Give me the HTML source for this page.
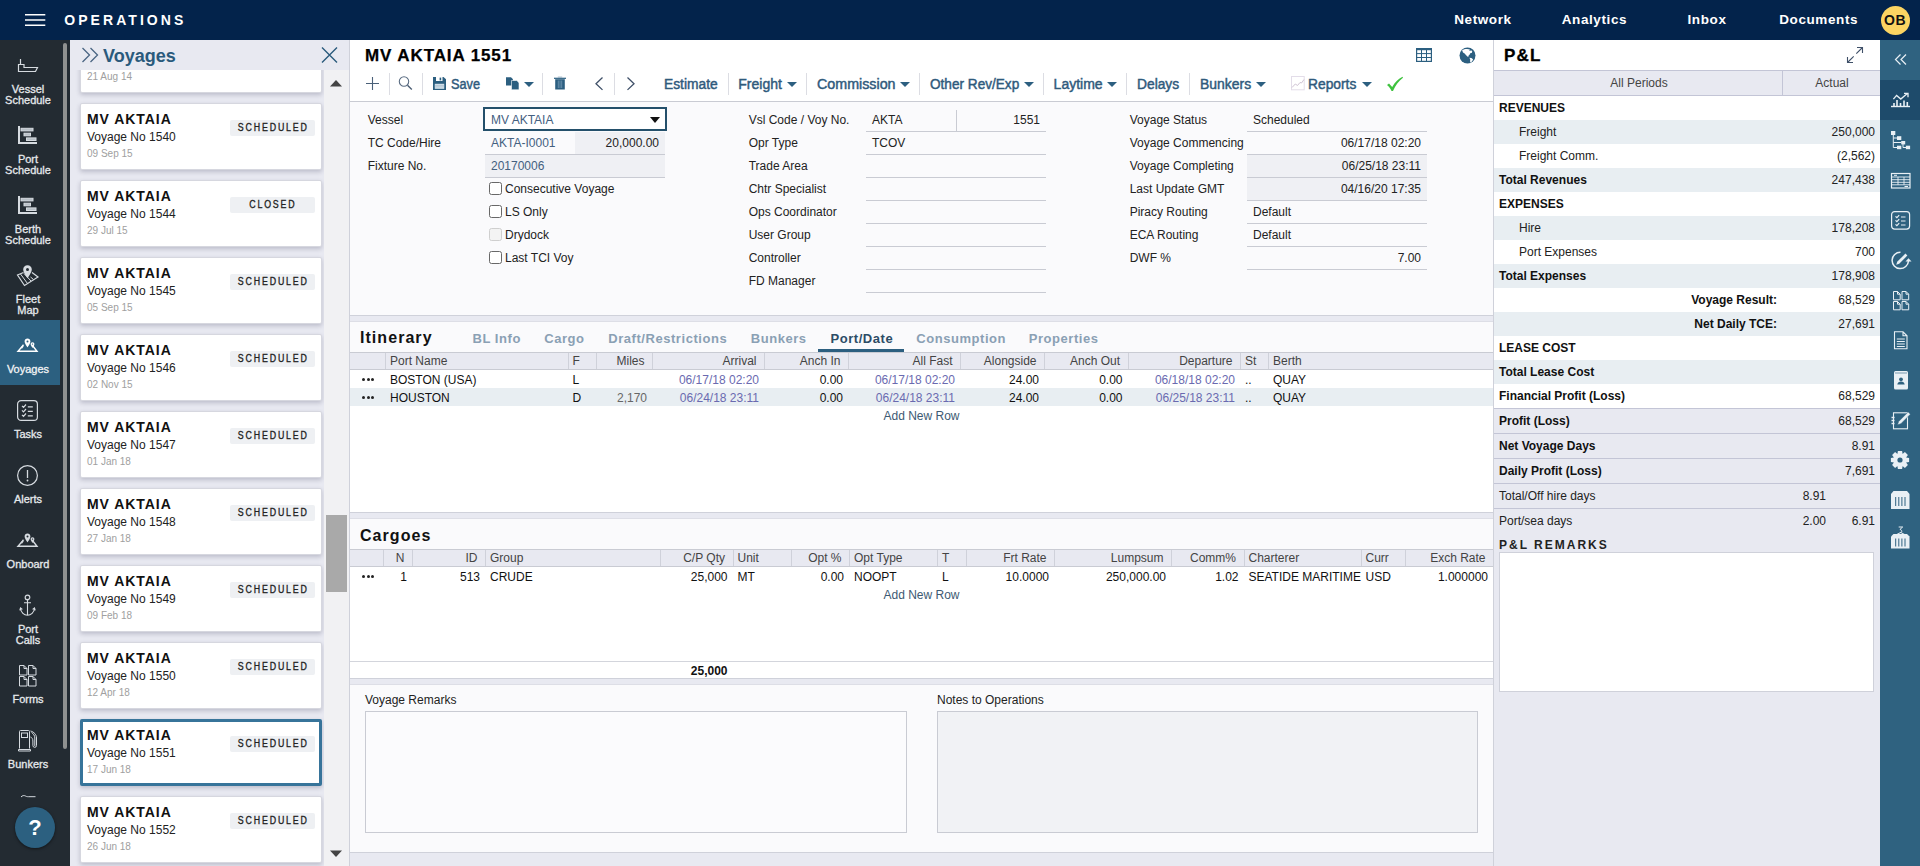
<!DOCTYPE html>
<html lang="en">
<head>
<meta charset="utf-8">
<title>Operations - MV AKTAIA 1551</title>
<style>
*{box-sizing:border-box;margin:0;padding:0}
html,body{width:1920px;height:866px;overflow:hidden;background:#fafafc;font-family:"Liberation Sans",Arial,sans-serif;font-size:12px;color:#222}
.abs{position:absolute}
#top{position:absolute;left:0;top:0;width:1920px;height:40px;background:#03234b;color:#fff}
#top .brand{position:absolute;left:64.300px;top:12px;font-size:14px;font-weight:bold;letter-spacing:3.05px;line-height:16px}
#top .lnk{position:absolute;top:12px;font-size:13.5px;font-weight:bold;letter-spacing:.6px;line-height:16px}
#top .av{position:absolute;left:1880.500px;top:5.500px;width:29px;height:29px;border-radius:50%;background:#fbd462;color:#111;font-weight:bold;font-size:14px;line-height:29px;text-align:center;letter-spacing:.5px}
#nav{position:absolute;left:0;top:40px;width:70px;height:826px;background:#232b32}
#nav .thumb{position:absolute;left:63px;top:3px;width:4px;height:706px;background:#8f9190;border-radius:2px}
#nav .it{position:absolute;left:0;width:56px;text-align:center;color:#e6e9ec;font-size:11px;line-height:11px;-webkit-text-stroke:.3px #e6e9ec}
#nav .act{position:absolute;left:0;top:280px;width:60px;height:65px;background:#2c6080}
#nav svg{position:absolute}
#help{position:absolute;left:15px;top:807px;width:40px;height:41px;border-radius:50%;background:#2c6080;color:#fff;font-weight:bold;font-size:22px;line-height:41px;text-align:center;box-shadow:0 1px 3px rgba(0,0,0,.5)}
#list{position:absolute;left:70px;top:40px;width:279px;height:826px;background:#e8e9f1;overflow:hidden}
#list .hd{position:absolute;left:0;top:0;width:279px;height:30px;background:#e8e9f1}
#list .ttl{position:absolute;left:33px;top:5px;font-size:18px;font-weight:bold;color:#2a5a7c;line-height:22px}
#list .sb{position:absolute;left:254px;top:30px;width:25px;height:796px;background:#f1f1f3}
#list .sbthumb{position:absolute;left:256px;top:475px;width:21px;height:77px;background:#a9a9a9}
.card{position:absolute;left:10px;width:242px;height:67px;background:#fff;border:1px solid #d6d7df;border-radius:2px;box-shadow:0 2px 4px rgba(60,60,90,.25)}
.card .b span{display:inline-block;transform:scaleX(.88);margin:0 -8px}
.card.sel::after{content:"";position:absolute;left:-1px;top:-1px;right:-1px;bottom:-1px;border:3px solid #37749a;border-radius:2px}
.card .n{position:absolute;left:6px;top:7px;font-size:14px;font-weight:bold;letter-spacing:.95px;line-height:16px;color:#111}
.card .v{position:absolute;left:6px;top:25px;font-size:12px;line-height:16px;color:#222}
.card .d{position:absolute;left:6px;top:44px;font-size:10px;line-height:12px;color:#a0a0a0;}
.card .b{position:absolute;left:149px;top:16px;width:85px;height:16px;background:#eef0f3;border-radius:2px;font-size:10px;font-weight:normal;-webkit-text-stroke:.32px #222;letter-spacing:2.1px;line-height:16px;white-space:nowrap;text-align:center;color:#222;padding-left:1px}

#main{position:absolute;left:349px;top:40px;width:1144px;height:826px;background:#fafafc;border-left:1px solid #cfd1da}
#main .wh{position:absolute;left:0;top:0;width:1143px;height:62px;background:#fff;border-bottom:1px solid #c9cbd3}
#main .title{position:absolute;left:15px;top:6px;font-size:17px;font-weight:bold;color:#000;line-height:20px;letter-spacing:.9px;-webkit-text-stroke:.25px #000}
.tb{position:absolute;top:36px;font-size:14px;font-weight:normal;color:#2f5a7c;-webkit-text-stroke:.45px #2f5a7c;line-height:16px;white-space:nowrap;transform:scaleX(.985);transform-origin:0 0}
.tsep{position:absolute;top:33px;width:1px;height:22px;background:#dcdde3}
.car{position:absolute;top:41.700px;width:0;height:0;border-left:5.200px solid transparent;border-right:5.200px solid transparent;border-top:5.800px solid #2c5f80;margin-left:-.2px}
.m svg{position:absolute}
.lb{position:absolute;font-size:12px;line-height:14px;color:#222;white-space:nowrap}
.in{position:absolute;height:23px;border-bottom:1px solid #c9cbd3;font-size:12px;line-height:22px;color:#222;padding:0 6px;white-space:nowrap}
.in.g{background:#eff0f4}
.in.r{text-align:right}
.in.bl{color:#44607f}
.cb{position:absolute;width:13px;height:13px;border:1px solid #686868;border-radius:2.500px;background:#fff}
.cb.dis{border-color:#cfcfcf;background:#f3f3f3}
.band{position:absolute;left:0;width:1143px;height:7px;background:#e8e9f1;border-top:1px solid #cfd1da;border-bottom:1px solid #dddee6}
.sec{position:absolute;left:10px;font-size:16px;font-weight:bold;color:#111;letter-spacing:1.05px;line-height:18px;margin-top:1px}
.tab{position:absolute;top:291px;font-size:13px;font-weight:bold;color:#8aa0b4;letter-spacing:.55px;line-height:16px;white-space:nowrap}
.th{position:absolute;left:0;width:1143px;height:18px;background:#e8e9f1;border-top:1px solid #c9cbd3;border-bottom:1px solid #c9cbd3}
.th div{position:absolute;top:0;height:16px;border-left:1px solid #cfd1da;font-size:12px;line-height:16px;color:#444;padding:0 5px;white-space:nowrap}
.th div.r,.tr div.r{text-align:right}
.th div.c,.tr div.c{text-align:center}
.th div{padding:0 7.500px 0 4px}
.tr div{padding:0 8px 0 3px}
.tr{position:absolute;left:0;width:1143px;height:18px;background:#fff}
.tr.alt{background:#e8eef2}
.tr div{position:absolute;top:1px;height:17px;font-size:12px;line-height:18px;color:#111;padding:0 5px;white-space:nowrap}
.tr div.bl{color:#6a6ab0}
.tr div.gy{color:#666}
.dots{position:absolute;left:12px;top:8px;width:13px;height:3px}
.dots i{position:absolute;top:0;width:3px;height:3px;border-radius:50%;background:#222}
.addrow{position:absolute;left:0;width:1143px;text-align:center;font-size:12px;line-height:14px;color:#3d5a73}
.ta{position:absolute;border:1px solid #c9cbd3;background:#fbfbfd}

#pnl{position:absolute;left:1493px;top:40px;width:387px;height:826px;background:#e8e9f1;border-left:1px solid #cfd1da}
#pnl .hd{position:absolute;left:0;top:0;width:386px;height:31px;background:#fff}
#pnl .ttl{position:absolute;left:10px;top:6px;font-size:17px;font-weight:bold;letter-spacing:1.250px;-webkit-text-stroke:.3px #000;line-height:20px;color:#000}
#pnl .tabs{position:absolute;left:0;top:30px;width:386px;height:26px;background:#e8e9f1;border-top:1px solid #c3c5d6;border-bottom:1px solid #c3c5d6}
#pnl .tabs div{position:absolute;top:0;height:24px;line-height:24px;font-size:12px;color:#444;text-align:center}
.pr{position:absolute;left:0;width:386px;height:24px;background:#fff;font-size:12px;line-height:24px;color:#222}
.pr.a{background:#e8eef2}
.pr.p{background:#e8e9f1;border-top:1px solid #c3c5d6;height:25px}
.pr b{position:absolute;left:5px;top:0;color:#111;white-space:nowrap}
.pr.p b,.pr.p span,.pr.p em,.pr.p u{top:-.5px}
.pr span{position:absolute;left:25px;top:0;white-space:nowrap}
.pr u{position:absolute;left:5px;top:0;text-decoration:none;white-space:nowrap}
.pr i{position:absolute;right:5px;top:0;font-style:normal}
.pr em{position:absolute;right:54px;top:0;font-style:normal}
.pr strong{position:absolute;right:103px;top:0;color:#111}
#right{position:absolute;left:1880px;top:40px;width:40px;height:826px;background:#2f6280}
#right .act{position:absolute;left:0;top:40px;width:40px;height:40px;background:#1e4b6b}
#right svg{position:absolute}
</style>
</head>
<body>
<div id="top">
  <svg class="abs" style="left:25px;top:13px" width="21" height="14" viewBox="0 0 21 14"><path d="M0 1.800h20.300M0 7h20.300M0 12.300h20.300" stroke="#fff" stroke-width="1.400" fill="none"/></svg>
  <div class="brand">OPERATIONS</div>
  <div class="lnk" style="left:1454.200px">Network</div>
  <div class="lnk" style="left:1561.700px">Analytics</div>
  <div class="lnk" style="left:1687.500px">Inbox</div>
  <div class="lnk" style="left:1779.200px">Documents</div>
  <div class="av">OB</div>
</div>

<div id="nav">
  <div class="act"></div>
  <div class="thumb"></div>
  <div class="it" style="top:44px">Vessel<br>Schedule</div>
  <div class="it" style="top:114px">Port<br>Schedule</div>
  <div class="it" style="top:184px">Berth<br>Schedule</div>
  <div class="it" style="top:254px">Fleet<br>Map</div>
  <div class="it" style="top:324px;color:#fff">Voyages</div>
  <div class="it" style="top:389px">Tasks</div>
  <div class="it" style="top:454px">Alerts</div>
  <div class="it" style="top:519px">Onboard</div>
  <div class="it" style="top:584px">Port<br>Calls</div>
  <div class="it" style="top:654px">Forms</div>
  <div class="it" style="top:719px">Bunkers</div>
  <svg style="left:17px;top:18px" width="22" height="15" viewBox="0 0 22 15" fill="none" stroke="#d6dbe0" stroke-width="1.2"><path d="M3.500 1v5.500M1.500 6.500h5.500v3h13.500l-2 4H1.500z"/></svg>
  <svg style="left:17px;top:85px" width="22" height="20" viewBox="0 0 22 20" fill="none" stroke="#d6dbe0" stroke-width="1.2"><path d="M2 1v17h18" stroke-width="2"/><rect x="4" y="3.300" width="12" height="2.600" fill="#b8c0c7" stroke-width="1"/><rect x="7" y="8.200" width="6.500" height="2.600" fill="#b8c0c7" stroke-width="1"/><rect x="9.500" y="12.900" width="9.500" height="2.600" fill="#b8c0c7" stroke-width="1"/></svg>
  <svg style="left:17px;top:155px" width="22" height="20" viewBox="0 0 22 20" fill="none" stroke="#d6dbe0" stroke-width="1.2"><path d="M2 1v17h18" stroke-width="2"/><rect x="4" y="3.300" width="12" height="2.600" fill="#b8c0c7" stroke-width="1"/><rect x="7" y="8.200" width="6.500" height="2.600" fill="#b8c0c7" stroke-width="1"/><rect x="9.500" y="12.900" width="9.500" height="2.600" fill="#b8c0c7" stroke-width="1"/></svg>
  <svg style="left:16px;top:224px" width="24" height="23" viewBox="0 0 24 23" fill="none" stroke="#d6dbe0" stroke-width="1.2"><path d="M7.500 8.500L1.500 11l7 10.500 13.500-8.500-6-4.500" /><path d="M4.500 10l7 9.500M8 9.500l7 7.500M14.500 13l3 2.500" stroke-width="1"/><path d="M11.500 1.200c-2.500 0-4.300 1.900-4.300 4.200 0 3 4.300 8.800 4.300 8.800s4.300-5.800 4.300-8.800c0-2.300-1.800-4.200-4.300-4.200z" fill="#d6dbe0" stroke="none"/><circle cx="11.500" cy="5.400" r="1.500" fill="#232b32" stroke="none"/></svg>
  <svg style="left:16px;top:297px" width="24" height="16" viewBox="0 0 24 16" fill="none" stroke="#ffffff" stroke-width="1.2"><path d="M7 8.500L2 14.200h19L16.500 8.500" stroke-width="1.400"/><path d="M11.500 1.500c-1.700 0-2.900 1.300-2.900 2.900 0 2 2.900 5.800 2.900 5.800s2.900-3.800 2.900-5.800c0-1.600-1.200-2.900-2.900-2.900z" fill="#ffffff" stroke="none"/><circle cx="11.500" cy="4.400" r="1" fill="#2c6080" stroke="none"/><path d="M16.500 5.200c-1.100 0-1.900.9-1.900 1.900 0 1.300 1.900 3.900 1.900 3.900s1.900-2.600 1.900-3.900c0-1-.8-1.900-1.900-1.900z" fill="#ffffff" stroke="none"/><circle cx="16.500" cy="7.100" r=".7" fill="#2c6080" stroke="none"/><path d="M6.800 7.200l-2.300 4.300 2.200-.2 1.500-3.300z" fill="#ffffff" stroke="none" opacity=".8"/></svg>
  <svg style="left:16px;top:359px" width="23" height="23" viewBox="0 0 23 23" fill="none" stroke="#d6dbe0" stroke-width="1.2"><rect x="1.600" y="1.600" width="19.800" height="19.800" rx="3.500"/><path d="M6 6.800l1.500 1.500 2.500-2.800M6 11.300l1.500 1.500 2.500-2.800M6 15.800l1.500 1.500 2.500-2.800M11.800 7.800h5M11.800 12.300h5M11.800 16.800h5"/></svg>
  <svg style="left:16px;top:423.5px" width="23" height="23" viewBox="0 0 23 23" fill="none" stroke="#d6dbe0" stroke-width="1.2"><circle cx="11.500" cy="11.500" r="9.900"/><path d="M11.500 6v8" stroke-width="1.300"/><circle cx="11.500" cy="16.500" r=".9" fill="#d6dbe0" stroke="none"/></svg>
  <svg style="left:16px;top:492px" width="24" height="16" viewBox="0 0 24 16" fill="none" stroke="#d6dbe0" stroke-width="1.2"><path d="M7 8.500L2 14.200h19L16.500 8.500" stroke-width="1.400"/><path d="M11.500 1.500c-1.700 0-2.900 1.300-2.900 2.900 0 2 2.900 5.800 2.900 5.800s2.900-3.800 2.900-5.800c0-1.600-1.200-2.900-2.900-2.900z" fill="#d6dbe0" stroke="none"/><circle cx="11.500" cy="4.400" r="1" fill="#232b32" stroke="none"/><path d="M16.500 5.200c-1.100 0-1.900.9-1.900 1.900 0 1.300 1.900 3.900 1.900 3.900s1.900-2.600 1.900-3.900c0-1-.8-1.900-1.900-1.900z" fill="#d6dbe0" stroke="none"/><circle cx="16.500" cy="7.100" r=".7" fill="#232b32" stroke="none"/><path d="M6.800 7.200l-2.300 4.300 2.200-.2 1.500-3.300z" fill="#d6dbe0" stroke="none" opacity=".8"/></svg>
  <svg style="left:18px;top:553px" width="19" height="24" viewBox="0 0 19 24" fill="none" stroke="#d6dbe0" stroke-width="1.2"><circle cx="9.500" cy="4.400" r="2.300"/><path d="M9.500 6.800V22.500M6 9.700h7M2.500 15.500c.5 4 3.500 6.800 7 6.800s6.500-2.800 7-6.800M1.800 17.300l.7-2.300 1.900 1.400M17.200 17.300l-.7-2.300-1.900 1.400" stroke-width="1.100"/></svg>
  <svg style="left:18px;top:624px" width="20" height="24" viewBox="0 0 20 24" fill="none" stroke="#d6dbe0" stroke-width="1.2"><path d="M1.5 1.5h4.500l3 3v6.500h-7.500zM6.0 1.5v3h3" stroke-width="1"/><path d="M10.5 1.5h4.500l3 3v6.500h-7.500zM15.0 1.5v3h3" stroke-width="1"/><path d="M1.5 12.5h4.500l3 3v6.500h-7.500zM6.0 12.5v3h3" stroke-width="1"/><path d="M10.5 12.5h4.500l3 3v6.500h-7.500zM15.0 12.5v3h3" stroke-width="1"/></svg>
  <svg style="left:17px;top:689px" width="22" height="24" viewBox="0 0 22 24" fill="none" stroke="#d6dbe0" stroke-width="1.2"><path d="M2.500 19.500V2.500a1 1 0 0 1 1-1h8a1 1 0 0 1 1 1v17M1.500 20.500h12v1.500h-12z" stroke-width="1"/><rect x="4.500" y="4" width="6" height="4.500" stroke-width="1"/><path d="M13.500 2c3.500 1 6 3.500 6 7v7.500a1.800 1.800 0 0 1-3.600 0V12c0-2-1-3.500-2.400-4M14.500 3.500c2 1.200 3.300 3.200 3.300 5.500v8" stroke-width="1"/></svg>
  <svg style="left:20px;top:753px" width="18" height="6" viewBox="0 0 18 6" fill="none" stroke="#d6dbe0" stroke-width="1.2"><path d="M1 4c1.500-1.600 3-1.800 4.500-1 1 .5 1.500.7 3 .7h7" stroke-width="1"/></svg>
</div>
<div id="help">?</div>

<div id="list">
  <div class="card" style="top:-14px"><div class="n">MV AKTAIA</div><div class="v">Voyage No 1539</div><div class="d">21 Aug 14</div><div class="b"><span>CLOSED</span></div></div>
  <div class="card" style="top:63px"><div class="n">MV AKTAIA</div><div class="v">Voyage No 1540</div><div class="d">09 Sep 15</div><div class="b"><span>SCHEDULED</span></div></div>
  <div class="card" style="top:140px"><div class="n">MV AKTAIA</div><div class="v">Voyage No 1544</div><div class="d">29 Jul 15</div><div class="b"><span>CLOSED</span></div></div>
  <div class="card" style="top:217px"><div class="n">MV AKTAIA</div><div class="v">Voyage No 1545</div><div class="d">05 Sep 15</div><div class="b"><span>SCHEDULED</span></div></div>
  <div class="card" style="top:294px"><div class="n">MV AKTAIA</div><div class="v">Voyage No 1546</div><div class="d">02 Nov 15</div><div class="b"><span>SCHEDULED</span></div></div>
  <div class="card" style="top:371px"><div class="n">MV AKTAIA</div><div class="v">Voyage No 1547</div><div class="d">01 Jan 18</div><div class="b"><span>SCHEDULED</span></div></div>
  <div class="card" style="top:448px"><div class="n">MV AKTAIA</div><div class="v">Voyage No 1548</div><div class="d">27 Jan 18</div><div class="b"><span>SCHEDULED</span></div></div>
  <div class="card" style="top:525px"><div class="n">MV AKTAIA</div><div class="v">Voyage No 1549</div><div class="d">09 Feb 18</div><div class="b"><span>SCHEDULED</span></div></div>
  <div class="card" style="top:602px"><div class="n">MV AKTAIA</div><div class="v">Voyage No 1550</div><div class="d">12 Apr 18</div><div class="b"><span>SCHEDULED</span></div></div>
  <div class="card sel" style="top:679px"><div class="n">MV AKTAIA</div><div class="v">Voyage No 1551</div><div class="d">17 Jun 18</div><div class="b"><span>SCHEDULED</span></div></div>
  <div class="card" style="top:756px"><div class="n">MV AKTAIA</div><div class="v">Voyage No 1552</div><div class="d">26 Jun 18</div><div class="b"><span>SCHEDULED</span></div></div>
  <div class="sb"></div>
  <div class="sbthumb"></div>
  <svg class="abs" style="left:259px;top:39px" width="14" height="8" viewBox="0 0 14 8"><path d="M1 7.5L7 1l6 6.5z" fill="#444"/></svg>
  <svg class="abs" style="left:259px;top:810px" width="14" height="8" viewBox="0 0 14 8"><path d="M1 .5L7 7l6-6.5z" fill="#444"/></svg>
  <div class="hd">
    <svg class="abs" style="left:11px;top:7px" width="18" height="16" viewBox="0 0 18 16"><path d="M1.500 1l7 7-7 7M9.500 1l7 7-7 7" stroke="#4a6583" stroke-width="1.300" fill="none"/></svg>
    <div class="ttl">Voyages</div>
    <svg class="abs" style="left:250.500px;top:7px" width="17" height="16" viewBox="0 0 17 16"><path d="M1 .5l15 15M16 .5l-15 15" stroke="#2a5a7c" stroke-width="1.4" fill="none"/></svg>
  </div>
</div>
<div id="main" class="m">
  <div class="wh"></div>
  <div class="title">MV AKTAIA 1551</div>
  <svg style="left:16px;top:36px" width="14" height="15" viewBox="0 0 14 15"><path d="M6.500 1v13M0 7.500h13" stroke="#4a6078" stroke-width="1.100" fill="none"/></svg>
  <svg style="left:48px;top:35px" width="16" height="16" viewBox="0 0 16 16"><circle cx="6" cy="6.500" r="4.700" stroke="#5a6c82" stroke-width="1.100" fill="none"/><path d="M9.500 10.200l4.300 4.200" stroke="#4a5c72" stroke-width="1.400" fill="none"/></svg>
  <svg style="left:83px;top:37px" width="13" height="13" viewBox="0 0 13 13"><path d="M0 0h10.500L13 2.300V13H0z" fill="#2c5f80"/><rect x="3" y="0" width="6.500" height="4" fill="#fff"/><rect x="6.600" y=".6" width="1.600" height="2.800" fill="#2c5f80"/><rect x="1.800" y="6.800" width="9.400" height="5" fill="#d9e6ef"/><path d="M1.800 8.300h9.400M1.800 9.900h9.400" stroke="#9fb6c6" stroke-width=".7"/></svg>
  <svg style="left:156px;top:37px" width="14" height="13" viewBox="0 0 14 13"><path d="M0 .2h5l2 2v6.300H0z" fill="#2c5f80"/><path d="M5.500 3.500h5.300l2.200 2.200V12.800H5.500z" fill="#2c5f80" stroke="#fff" stroke-width=".6"/></svg>
  <svg style="left:204px;top:36px" width="12" height="14" viewBox="0 0 12 14"><path d="M0 2.300h12" stroke="#2c5f80" stroke-width="1.200"/><path d="M3.800 1.200h4.400" stroke="#9fb6c6" stroke-width="1.200"/><path d="M1.200 3.200h9.600v10.300H1.200z" fill="#2c5f80"/><path d="M4.300 4.500v7.500M6 4.500v7.500M7.700 4.500v7.500" stroke="#7fa3bd" stroke-width=".7"/></svg>
  <svg style="left:244px;top:36px" width="10" height="15" viewBox="0 0 10 15"><path d="M8.500 1.500L2 7.700l6.500 6.200" stroke="#3f5068" stroke-width="1.300" fill="none"/></svg>
  <svg style="left:276px;top:36px" width="10" height="15" viewBox="0 0 10 15"><path d="M1.500 1.500L8 7.700l-6.500 6.200" stroke="#3f5068" stroke-width="1.300" fill="none"/></svg>
  <div class="tsep" style="left:39px"></div>
  <div class="tsep" style="left:72px"></div>
  <div class="tsep" style="left:192px"></div>
  <div class="tsep" style="left:264px"></div>
  <div class="tsep" style="left:378px"></div>
  <div class="tsep" style="left:456px"></div>
  <div class="tsep" style="left:569px"></div>
  <div class="tsep" style="left:693px"></div>
  <div class="tsep" style="left:776px"></div>
  <div class="tsep" style="left:839px"></div>
  <div class="tb" style="left:101px;transform:scaleX(.91)">Save</div>
  <div class="tb" style="left:313.75px">Estimate</div>
  <div class="tb" style="left:388.300px;transform:scaleX(1)">Freight</div>
  <div class="tb" style="left:466.800px;transform:scaleX(1.02)">Commission</div>
  <div class="tb" style="left:579.500px;transform:scaleX(.972)">Other Rev/Exp</div>
  <div class="tb" style="left:703.600px;transform:scaleX(1)">Laytime</div>
  <div class="tb" style="left:787px">Delays</div>
  <div class="tb" style="left:849.600px;transform:scaleX(.995)">Bunkers</div>
  <div class="tb" style="left:958px">Reports</div>
  <div class="car" style="left:174.2px"></div>
  <div class="car" style="left:437.1px"></div>
  <div class="car" style="left:550.3px"></div>
  <div class="car" style="left:673.8px"></div>
  <div class="car" style="left:757.5px"></div>
  <div class="car" style="left:905.8px"></div>
  <div class="car" style="left:1012.0px"></div>
  <svg style="left:940.500px;top:36px" width="14" height="15" viewBox="0 0 14 15"><rect x=".5" y=".5" width="12.700" height="13.300" stroke="#e3dde9" stroke-width="1" fill="#fff"/><path d="M1 11.500l3.300-3.500 2.200 1.500 2.500-3 1.500.5 2.500-3.500" stroke="#cfc3d3" stroke-width="1" fill="none"/></svg>
  <svg style="left:1036px;top:36px" width="18" height="16" viewBox="0 0 18 16"><path d="M1 9l2-1.500 3.200 3.600C9 6 12.500 2.800 16.500 .8l.5 1C12.500 5 9.500 9.500 7 15H5.500C4.500 12.500 3 10.500 1 9z" fill="#3fc23f"/></svg>
  <svg style="left:1065.700px;top:8px" width="17" height="14" viewBox="0 0 17 14"><rect x=".6" y=".6" width="14.800" height="12.800" fill="none" stroke="#2c5f80" stroke-width="1.200"/><rect x=".6" y=".6" width="14.800" height="1.600" fill="#2c5f80"/><path d="M.6 5.600h14.800M.6 9.500h14.800M5.500 2v11.400M10.500 2v11.400" stroke="#2c5f80" stroke-width="1"/></svg>
  <svg style="left:1109.400px;top:6.900px" width="17" height="17" viewBox="0 0 17 17"><circle cx="8.500" cy="8.500" r="8" fill="#2c5f80"/><path d="M3.100 3.300C4.500 2.300 6 1.900 8 1.900c1.200 0 2.200.3 3 .700l-.8 1 1.200.300.500-.800c.600.400 1 .9 1.400 1.500l-.600 1.300-1.200.200-.800 1.500-1.200 1.200-.200 1.100-.9-.3-1.500-1.600-1.300-1.400-1.600-1z" fill="#fff"/><path d="M10.400 10.700l2 .300 1.700 1.300-.800 1.800-1.600 1.700-.700-1.500.300-1.500z" fill="#fff"/></svg>
  <div class="lb" style="left:17.700px;top:73px">Vessel</div>
  <div class="lb" style="left:17.700px;top:96px">TC Code/Hire</div>
  <div class="lb" style="left:17.700px;top:119px">Fixture No.</div>
  <div class="abs" style="left:133px;top:67px;width:184px;height:24px;border:2px solid #24506b;background:#fff;font-size:12px;line-height:22px;color:#44607f;padding-left:6px">MV AKTAIA<svg style="left:165px;top:8px" width="10" height="6" viewBox="0 0 10 6"><path d="M0 0h10L5 6z" fill="#111"/></svg></div>
  <div class="in bl" style="left:135px;top:92px;width:90px">AKTA-I0001</div>
  <div class="in g r" style="left:225px;top:92px;width:90px">20,000.00</div>
  <div class="in g bl" style="left:135px;top:115px;width:180px">20170006</div>
  <div class="cb" style="left:139px;top:142px"></div>
  <div class="lb" style="left:155px;top:142px">Consecutive Voyage</div>
  <div class="cb" style="left:139px;top:165px"></div>
  <div class="lb" style="left:155px;top:165px">LS Only</div>
  <div class="cb dis" style="left:139px;top:188px"></div>
  <div class="lb" style="left:155px;top:188px">Drydock</div>
  <div class="cb" style="left:139px;top:211px"></div>
  <div class="lb" style="left:155px;top:211px">Last TCI Voy</div>
  <div class="lb" style="left:398.700px;top:73px">Vsl Code / Voy No.</div>
  <div class="lb" style="left:398.700px;top:96px">Opr Type</div>
  <div class="lb" style="left:398.700px;top:119px">Trade Area</div>
  <div class="lb" style="left:398.700px;top:142px">Chtr Specialist</div>
  <div class="lb" style="left:398.700px;top:165px">Ops Coordinator</div>
  <div class="lb" style="left:398.700px;top:188px">User Group</div>
  <div class="lb" style="left:398.700px;top:211px">Controller</div>
  <div class="lb" style="left:398.700px;top:234px">FD Manager</div>
  <div class="in " style="left:516px;top:69px;width:90px">AKTA</div>
  <div class="in r" style="left:606px;top:69px;width:90px">1551</div>
  <div class="abs" style="left:606px;top:70px;width:1px;height:22px;background:#c9cbd3"></div>
  <div class="in " style="left:516px;top:92px;width:180px">TCOV</div>
  <div class="in " style="left:516px;top:115px;width:180px"></div>
  <div class="in " style="left:516px;top:138px;width:180px"></div>
  <div class="in " style="left:516px;top:161px;width:180px"></div>
  <div class="in " style="left:516px;top:184px;width:180px"></div>
  <div class="in " style="left:516px;top:207px;width:180px"></div>
  <div class="in " style="left:516px;top:230px;width:180px"></div>
  <div class="lb" style="left:779.700px;top:73px">Voyage Status</div>
  <div class="lb" style="left:779.700px;top:96px">Voyage Commencing</div>
  <div class="lb" style="left:779.700px;top:119px">Voyage Completing</div>
  <div class="lb" style="left:779.700px;top:142px">Last Update GMT</div>
  <div class="lb" style="left:779.700px;top:165px">Piracy Routing</div>
  <div class="lb" style="left:779.700px;top:188px">ECA Routing</div>
  <div class="lb" style="left:779.700px;top:211px">DWF %</div>
  <div class="in " style="left:897px;top:69px;width:180px">Scheduled</div>
  <div class="in r" style="left:897px;top:92px;width:180px">06/17/18 02:20</div>
  <div class="in g r" style="left:897px;top:115px;width:180px">06/25/18 23:11</div>
  <div class="in g r" style="left:897px;top:138px;width:180px">04/16/20 17:35</div>
  <div class="in " style="left:897px;top:161px;width:180px">Default</div>
  <div class="in " style="left:897px;top:184px;width:180px">Default</div>
  <div class="in r" style="left:897px;top:207px;width:180px">7.00</div>
  <div class="band" style="top:275px"></div>
  <div class="sec" style="top:288px">Itinerary</div>
  <div class="tab" style="left:122.5px">BL Info</div>
  <div class="tab" style="left:194.25px">Cargo</div>
  <div class="tab" style="left:258.25px">Draft/Restrictions</div>
  <div class="tab" style="left:400.75px">Bunkers</div>
  <div class="tab" style="left:480.5px;color:#2c4c66">Port/Date</div>
  <div class="tab" style="left:566.25px">Consumption</div>
  <div class="tab" style="left:678.75px">Properties</div>
  <div class="abs" style="left:468px;top:309px;width:86px;height:3px;background:#2c5f80"></div>
  <div class="abs" style="left:0;top:312px;width:1143px;height:160px;background:#fff"></div>
  <div class="th" style="top:312px"><div style="left:0;width:35px;border-left:none"></div><div class="" style="left:35px;width:182.5px">Port Name</div><div class="" style="left:217.5px;width:28.5px">F</div><div class="r" style="left:246px;width:56px">Miles</div><div class="r" style="left:302px;width:112px">Arrival</div><div class="r" style="left:414px;width:84px">Anch In</div><div class="r" style="left:498px;width:112px">All Fast</div><div class="r" style="left:610px;width:84px">Alongside</div><div class="r" style="left:694px;width:83.5px">Anch Out</div><div class="r" style="left:777.5px;width:112.5px">Departure</div><div class="" style="left:890px;width:28px">St</div><div class="" style="left:918px;width:225px">Berth</div></div>
  <div class="tr" style="top:330px"><span class="dots"><i style="left:0"></i><i style="left:4.500px"></i><i style="left:9px"></i></span><div class="" style="left:35px;width:182.5px">BOSTON (USA)</div><div class="" style="left:217.5px;width:28.5px">L</div><div class="r bl" style="left:302px;width:112px">06/17/18 02:20</div><div class="r" style="left:414px;width:84px">0.00</div><div class="r bl" style="left:498px;width:112px">06/17/18 02:20</div><div class="r" style="left:610px;width:84px">24.00</div><div class="r" style="left:694px;width:83.5px">0.00</div><div class="r bl" style="left:777.5px;width:112.5px">06/18/18 02:20</div><div class="" style="left:890px;width:28px">..</div><div class="" style="left:918px;width:225px">QUAY</div></div>
  <div class="tr alt" style="top:348px"><span class="dots"><i style="left:0"></i><i style="left:4.500px"></i><i style="left:9px"></i></span><div class="" style="left:35px;width:182.5px">HOUSTON</div><div class="" style="left:217.5px;width:28.5px">D</div><div class="r gy" style="left:246px;width:56px">2,170</div><div class="r bl" style="left:302px;width:112px">06/24/18 23:11</div><div class="r" style="left:414px;width:84px">0.00</div><div class="r bl" style="left:498px;width:112px">06/24/18 23:11</div><div class="r" style="left:610px;width:84px">24.00</div><div class="r" style="left:694px;width:83.5px">0.00</div><div class="r bl" style="left:777.5px;width:112.5px">06/25/18 23:11</div><div class="" style="left:890px;width:28px">..</div><div class="" style="left:918px;width:225px">QUAY</div></div>
  <div class="addrow" style="top:369px">Add New Row</div>
  <div class="band" style="top:472px"></div>
  <div class="sec" style="top:486px">Cargoes</div>
  <div class="abs" style="left:0;top:509px;width:1143px;height:129px;background:#fff"></div>
  <div class="th" style="top:509px"><div style="left:0;width:33px;border-left:none"></div><div class="r" style="left:33px;width:29px">N</div><div class="r" style="left:62px;width:73px">ID</div><div class="" style="left:135px;width:174.5px">Group</div><div class="r" style="left:309.5px;width:73.0px">C/P Qty</div><div class="" style="left:382.5px;width:58.5px">Unit</div><div class="r" style="left:441px;width:58px">Opt %</div><div class="" style="left:499px;width:88px">Opt Type</div><div class="" style="left:587px;width:29px">T</div><div class="r" style="left:616px;width:88px">Frt Rate</div><div class="r" style="left:704px;width:117px">Lumpsum</div><div class="r" style="left:821px;width:72.5px">Comm%</div><div class="" style="left:893.5px;width:117.0px">Charterer</div><div class="" style="left:1010.5px;width:44.0px">Curr</div><div class="r" style="left:1054.5px;width:88.5px">Exch Rate</div></div>
  <div class="tr" style="top:527px"><span class="dots"><i style="left:0"></i><i style="left:4.500px"></i><i style="left:9px"></i></span><div class="r" style="left:33px;width:29px">1</div><div class="r" style="left:62.5px;width:72.5px">513</div><div class="" style="left:135px;width:174.5px">CRUDE</div><div class="r" style="left:309.5px;width:73.0px">25,000</div><div class="" style="left:382.5px;width:58.5px">MT</div><div class="r" style="left:441px;width:58px">0.00</div><div class="" style="left:499px;width:88px">NOOPT</div><div class="" style="left:587px;width:29px">L</div><div class="r" style="left:616px;width:88px">10.0000</div><div class="r" style="left:704px;width:117px">250,000.00</div><div class="r" style="left:821px;width:72.5px">1.02</div><div class="" style="left:893.5px;width:117.0px">SEATIDE MARITIME</div><div class="" style="left:1010.5px;width:44.0px">USD</div><div class="r" style="left:1054.5px;width:88.5px">1.000000</div></div>
  <div class="addrow" style="top:548px">Add New Row</div>
  <div class="abs" style="left:0;top:621px;width:1143px;height:1px;background:#d3d5dc"></div>
  <div class="tr" style="top:622px;height:16px"><div class="r" style="left:309.500px;width:73px;font-weight:bold;top:0">25,000</div></div>
  <div class="band" style="top:638px"></div>
  <div class="lb" style="left:15px;top:653px">Voyage Remarks</div>
  <div class="ta" style="left:15px;top:671px;width:542px;height:122px"></div>
  <div class="lb" style="left:587px;top:653px">Notes to Operations</div>
  <div class="ta" style="left:587px;top:671px;width:541px;height:122px;background:#f1f2f5"></div>
  <div class="abs" style="left:0;top:812px;width:1143px;height:14px;background:#e8e9f1;border-top:1px solid #cfd1da"></div>
</div>

<div id="pnl">
<div class="hd"></div>
<div class="ttl">P&amp;L</div>
<svg class="abs" style="left:352px;top:6px" width="18" height="18" viewBox="0 0 18 18"><path d="M1.500 16.500L7.700 10.300M10.300 7.700L16.500 1.500M11 1.500h5.500v5.500M1.500 11v5.500h5.500" stroke="#3f5068" stroke-width="1.100" fill="none"/></svg>
<div class="tabs"><div style="left:1px;width:288px">All Periods</div><div style="left:288px;width:99px;border-left:1px solid #c3c5d6">Actual</div></div>
<div class="pr " style="top:56px"><b>REVENUES</b></div>
<div class="pr a" style="top:80px"><span>Freight</span><i>250,000</i></div>
<div class="pr " style="top:104px"><span>Freight Comm.</span><i>(2,562)</i></div>
<div class="pr a" style="top:128px"><b>Total Revenues</b><i>247,438</i></div>
<div class="pr " style="top:152px"><b>EXPENSES</b></div>
<div class="pr a" style="top:176px"><span>Hire</span><i>178,208</i></div>
<div class="pr " style="top:200px"><span>Port Expenses</span><i>700</i></div>
<div class="pr a" style="top:224px"><b>Total Expenses</b><i>178,908</i></div>
<div class="pr " style="top:248px"><strong>Voyage Result:</strong><i>68,529</i></div>
<div class="pr a" style="top:272px"><strong>Net Daily TCE:</strong><i>27,691</i></div>
<div class="pr " style="top:296px"><b>LEASE COST</b></div>
<div class="pr a" style="top:320px"><b>Total Lease Cost</b></div>
<div class="pr " style="top:344px"><b>Financial Profit (Loss)</b><i>68,529</i></div>
<div class="pr p" style="top:368px"><b>Profit (Loss)</b><i>68,529</i></div>
<div class="pr p" style="top:393px"><b>Net Voyage Days</b><i>8.91</i></div>
<div class="pr p" style="top:418px"><b>Daily Profit (Loss)</b><i>7,691</i></div>
<div class="pr p" style="top:443px"><u>Total/Off hire days</u><em>8.91</em></div>
<div class="pr p" style="top:468px"><u>Port/sea days</u><em>2.00</em><i>6.91</i></div>
<div class="abs" style="left:5px;top:497px;font-size:12px;font-weight:bold;letter-spacing:2px;line-height:14px;color:#222;white-space:nowrap;margin-top:1px">P&amp;L REMARKS</div>
<div class="abs" style="left:5px;top:512px;width:375px;height:140px;background:#fff;border:1px solid #cfd1da"></div>
</div>
<div id="right">
<div class="act"></div>
<svg style="left:14px;top:13px" width="14" height="13" viewBox="0 0 14 13" fill="none" stroke="#e9f0f5" stroke-width="1.200"><path d="M6.500 1.500l-5 5 5 5M12 1.500l-5 5 5 5"/></svg>
<svg style="left:10px;top:51px" width="22" height="17" viewBox="0 0 22 17" fill="none" stroke="#e9f0f5" stroke-width="1.200"><path d="M1 15.500h19" stroke-width="1.400"/><path d="M4 12v3M7 9v6M10.500 12v3M14 9.500v5.500M17.300 11v4" stroke-width="1.600"/><path d="M3.400 8.100l3.200-3.700 4.200 3.700 6.500-5.600M14 2.300h4v4" stroke-width="1.300"/></svg>
<svg style="left:10px;top:90px" width="22" height="21" viewBox="0 0 22 21" fill="none" stroke="#e9f0f5" stroke-width="1.200"><path d="M3.300 5v12.500h4M3.300 8h4M3.300 12.500h8M13 14v3.500h3" stroke-width="1"/><g fill="#e9f0f5" stroke="none"><rect x="1" y="1" width="4.300" height="4"/><rect x="7" y="6.200" width="4.300" height="3.800"/><rect x="11.200" y="11" width="4" height="3.400"/><rect x="7" y="15.700" width="4.300" height="3.500"/><rect x="15.900" y="15.700" width="4.200" height="3.500"/></g></svg>
<svg style="left:10px;top:132px" width="22" height="18" viewBox="0 0 22 18" fill="none" stroke="#e9f0f5" stroke-width="1.200"><rect x="1.500" y="1.500" width="18.500" height="14.500" stroke-width="1.200"/><path d="M1.500 5h18.500M1.500 7.700h18.500M1.500 10.300h18.500M1.500 12.800h18.500M8 5v7.800M14 5v7.800" stroke-width=".9"/><path d="M4 3.300h3M14.500 14.500h3.500" stroke-width="1"/></svg>
<svg style="left:10px;top:170px" width="22" height="21" viewBox="0 0 22 21" fill="none" stroke="#e9f0f5" stroke-width="1.200"><rect x="1.600" y="1.600" width="18" height="17.500" rx="3"/><path d="M5.500 6.300l1.400 1.400 2.300-2.500M5.500 10.300l1.400 1.400 2.300-2.500M5.500 14.300l1.400 1.400 2.300-2.500M11 7h4.500M11 11h4.500M11 15h4.500" stroke-width="1.200"/></svg>
<svg style="left:9px;top:210px" width="23" height="20" viewBox="0 0 23 20" fill="none" stroke="#e9f0f5" stroke-width="1.200"><path d="M11.500 2.200A8.200 8.200 0 1 0 19.500 11" stroke-width="1.500"/><path d="M16.500 11.500l3-3.300 3 3.300z" fill="#e9f0f5" stroke="none"/><path d="M8.200 11.800l-1 3 3-1 8.200-8.200-2-2z" fill="#e9f0f5" stroke="none"/></svg>
<svg style="left:12px;top:250px" width="19" height="22" viewBox="0 0 19 22" fill="none" stroke="#e9f0f5" stroke-width="1.200"><path d="M1.5 1.5h4l2.700 2.700v5.600h-6.700zM5.5 1.5v2.700h2.700" stroke-width="1"/><path d="M10 1.5h4l2.700 2.700v5.600h-6.700zM14 1.5v2.700h2.700" stroke-width="1"/><path d="M1.5 11.5h4l2.700 2.700v5.600h-6.700zM5.5 11.5v2.700h2.700" stroke-width="1"/><path d="M10 11.5h4l2.700 2.700v5.600h-6.700zM14 11.5v2.700h2.700" stroke-width="1"/></svg>
<svg style="left:13px;top:290px" width="16" height="20" viewBox="0 0 16 20" fill="none" stroke="#e9f0f5" stroke-width="1.200"><path d="M1.500 1.800h8.500l4 4v13h-12.500zM10 1.800v4h4" stroke-width="1.100"/><path d="M3.800 9h8M3.800 11.500h8M3.800 14h8M3.800 16.500h8" stroke-width="1"/></svg>
<svg style="left:13px;top:330px" width="16" height="21" viewBox="0 0 16 21" fill="none" stroke="#e9f0f5" stroke-width="1.200"><rect x="1" y="1" width="14" height="18.500" rx="1.500" fill="#e9f0f5" stroke="none"/><path d="M2 3h12" stroke="#2f6280" stroke-width=".6"/><circle cx="8" cy="9.300" r="1.900" fill="#2f6280" stroke="none"/><path d="M4.300 14.500c.3-2 1.700-3 3.700-3s3.400 1 3.700 3z" fill="#2f6280" stroke="none"/></svg>
<svg style="left:10px;top:370px" width="22" height="21" viewBox="0 0 22 21" fill="none" stroke="#e9f0f5" stroke-width="1.200"><rect x="3.500" y="2.800" width="14" height="16" stroke-width="1.100"/><path d="M1.500 7.500h3M1.500 10.500h3M1.500 13.500h3" stroke-width="1.300"/><path d="M7.500 14.800l1.200-3.300 9.500-9.500 2.200 2.200-9.500 9.500z" fill="#e9f0f5" stroke="#2f6280" stroke-width=".5"/></svg>
<svg style="left:9.4px;top:409px" width="22" height="22" viewBox="0 0 22 22" fill="none" stroke="#e9f0f5" stroke-width="1.200"><path d="M20.1 8.9L20.1 13.1L17.1 13.6L17.1 13.5L18.9 15.9L15.9 18.9L13.5 17.1L13.6 17.1L13.1 20.1L8.9 20.1L8.4 17.1L8.5 17.1L6.1 18.9L3.1 15.9L4.9 13.5L4.9 13.6L1.9 13.1L1.9 8.9L4.9 8.4L4.9 8.5L3.1 6.1L6.1 3.1L8.5 4.9L8.4 4.9L8.9 1.9L13.1 1.9L13.6 4.9L13.5 4.9L15.9 3.1L18.9 6.1L17.1 8.5L17.1 8.4z" fill="#e9f0f5" stroke="none"/><circle cx="11" cy="11" r="2.600" fill="#2f6280" stroke="none"/></svg>
<svg style="left:10px;top:450px" width="22" height="20" viewBox="0 0 22 20" fill="none" stroke="#e9f0f5" stroke-width="1.200"><path d="M1 19V4l2.500-3h13.500l2.500 3V19z" fill="#e9f0f5" stroke="none"/><path d="M5.700 7v9M8.800 7v9M11.900 7v9M15 7v9" stroke="#2f6280" stroke-width="1"/></svg>
<svg style="left:10px;top:486px" width="22" height="24" viewBox="0 0 22 24" fill="none" stroke="#e9f0f5" stroke-width="1.200"><path d="M1 22.6V10.5l2.500-2.5h13.500l2.500 2.5V22.6z" fill="#e9f0f5" stroke="none"/><path d="M5.700 12.5v8M8.800 12.5v8M11.900 12.5v8M15 12.5v8" stroke="#2f6280" stroke-width="1"/><path d="M8.700 1h4l-2.800 2.500c2.500.3 2.500 3.200 0 3.200M10.700 6.500l-5 2.500M10.700 6.500l5 2.500" stroke-width="1"/></svg>
</div>
</body>
</html>
